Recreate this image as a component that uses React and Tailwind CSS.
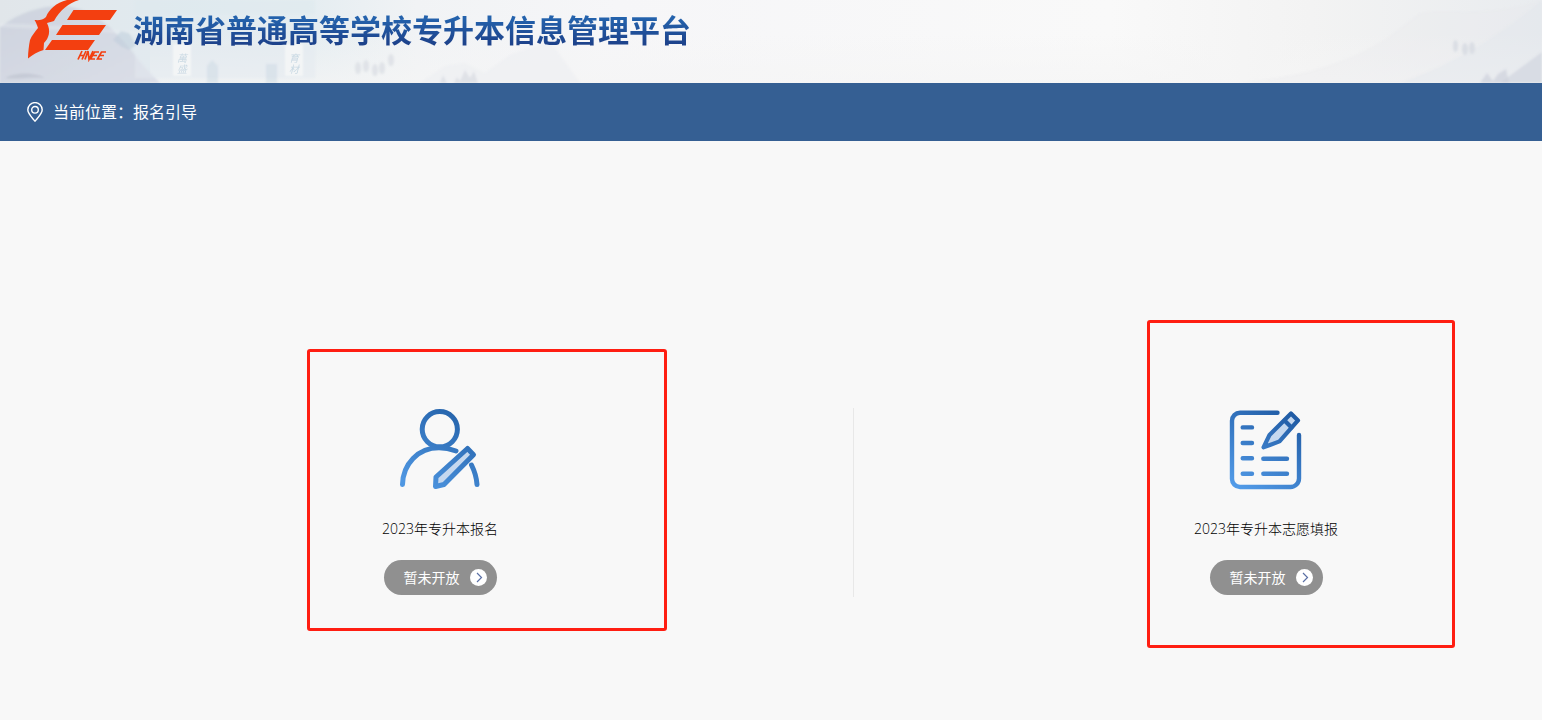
const font = "font-['Open_Sans','Noto_Sans_CJK_SC',sans-serif]";

function BannerArt() {
  return (
    <svg className="absolute inset-0 h-full w-full" viewBox="0 0 1542 83" preserveAspectRatio="none" aria-hidden="true">
      <defs>
        <linearGradient id="sky" x1="0" x2="1" y1="0" y2="0">
          <stop offset="0" stopColor="#e1e6ea" />
          <stop offset="0.1" stopColor="#e1eaef" />
          <stop offset="0.2" stopColor="#e5edf1" />
          <stop offset="0.27" stopColor="#f1f3f5" />
          <stop offset="0.4" stopColor="#f6f6f8" />
          <stop offset="0.72" stopColor="#f9f9f9" />
          <stop offset="0.85" stopColor="#f3f3f3" />
          <stop offset="1" stopColor="#e9ecef" />
        </linearGradient>
        <linearGradient id="mist" x1="0" x2="0" y1="0" y2="1">
          <stop offset="0.4" stopColor="#f5f5f5" stopOpacity="0" />
          <stop offset="1" stopColor="#f5f5f5" stopOpacity="0.7" />
        </linearGradient>
        <linearGradient id="hill" x1="0" x2="1" y1="0" y2="1">
          <stop offset="0" stopColor="#c9cfdb" />
          <stop offset="1" stopColor="#d9dbe6" />
        </linearGradient>
        <filter id="haze" x="-10%" y="-10%" width="120%" height="120%">
          <feGaussianBlur stdDeviation="1" />
        </filter>
      </defs>
      <rect width="1542" height="83" fill="url(#sky)" />
      <rect x="150" width="1392" height="83" fill="url(#mist)" />
      <g filter="url(#haze)">
        <path d="M0 27C20 12 42 5 66 6c30 4 48 24 66 45 8 12 18 22 28 32H0Z" fill="url(#hill)" opacity="0.8" />
        <path d="M0 23l60 3 90 6v3l-90-5-60-3Z" fill="#eef1f4" opacity="0.3" />
        <path d="M5 78c10-6 30-6 40 0-12-2-26 2-40 0Z" fill="#b8bdc9" opacity="0.5" />
        <path d="M113 40l8-9 8 2 7 12-7 5-7-3Z" fill="#bccbda" opacity="0.5" />
        <path d="M135 0h180v14H135Z" fill="#dbe8ee" opacity="0.4" />
        <path d="M135 46h180v32H135Z" fill="#e4eaef" opacity="0.5" />
        <path d="M173 44h18v32h-18ZM285 44h18v32h-18Z" fill="#f3f5f6" />
        <path d="M207 83V66l5-6 6 6v17ZM266 64h11v19h-11Z" fill="#ccd9e3" opacity="0.5" />
        <path d="M355 68c0-8 6-8 6 0s-6 8-6 0Zm8-2c0-8 6-8 6 0s-6 8-6 0Zm9 4c0-8 6-8 6 0s-6 8-6 0Zm7-2c0-8 6-8 6 0s-6 8-6 0Zm9-8c0-8 6-8 6 0s-6 8-6 0Z" fill="#d8dde3" opacity="0.7" />
        <path d="M420 83l25-17 20-3 20 10 25-18 40-14 30 42Z" fill="#eceef2" opacity="0.6" />
        <path d="M454 83l3-6 3 4 5-11 5 8 4-7 4 12ZM440 83l3-8 4 8Z" fill="#d8dbe3" opacity="0.7" />
        <path d="M1240 83c60-8 80-12 120-30 30-14 40-26 60-40 30-6 60 6 122-13v83Z" fill="#e6e9ed" opacity="0.25" />
        <path d="M1400 83c60-22 100-48 142-83v83Z" fill="#e0e4ea" opacity="0.35" />
        <path d="M1500 83l42-31v31Z" fill="#d3d8e1" opacity="0.8" />
        <path d="M1480 83l7-10 6 8 5-7 8-5 3 14Z" fill="#ced2dc" opacity="0.7" />
        <path d="M1453 46c0-8 5-8 5 0s-5 8-5 0Zm9 3c0-8 6-8 6 0s-6 8-6 0Zm7-1c0-8 6-8 6 0s-6 8-6 0Z" fill="#dadee4" />
      </g>
      <g fill="#c9d9e3" fontSize="10" fontStyle="italic" textAnchor="middle">
        <text x="182" y="62">萬</text>
        <text x="182" y="73">盛</text>
        <text x="294" y="62">育</text>
        <text x="294" y="73">材</text>
      </g>
    </svg>
  );
}

function Logo() {
  return (
    <svg className="h-[62px] w-[92px] shrink-0" viewBox="0 0 92 62" role="img" aria-label="HNEE">
      <g fill="#f33f10">
        <path d="M53 0C43 3 34 10 28 21C26 22 23 22 21 23C25 31 23 38 18 43L17.500 50C12 51.500 6 55 2 58.500C2 52 3 45 4 40C6 35 9 32 12 28C11 25 10 22 8.500 20C13 20.500 17 20 20 17C23 9 30 3 41 0Z" />
        <path d="M47.500 10H91L84 20H41ZM36.500 25H80L73 35H30ZM26 40H69L62 50H19Z" />
      </g>
      <path
        d="M56 51l-4 8.500M60 51l-4 8.500M54 55.500h4M59 59.500l3-8.500 1 8.500 4-8.500M73 52h-4.500l-4 7H69M66.500 55.500h4.500M80 52h-4.500l-4 7H76M73.500 55.500h4.500"
        fill="none"
        stroke="#f33f10"
        strokeWidth="1.700"
      />
    </svg>
  );
}

function PinIcon() {
  return (
    <svg className="h-5 w-4 shrink-0" viewBox="0 0 16 20" fill="none" stroke="white" strokeWidth="1.400" aria-hidden="true">
      <path d="M8 19.200C6 16.500 .8 12 .8 7.800a7.200 7.200 0 0 1 14.400 0C15.200 12 10 16.500 8 19.200Z" />
      <circle cx="8" cy="7.800" r="3.300" />
    </svg>
  );
}

function PersonIcon() {
  return (
    <svg className="h-[82px] w-20" viewBox="0 0 80 82" fill="none" strokeLinecap="round" strokeLinejoin="round" aria-hidden="true">
      <defs>
        <linearGradient id="personBlue" gradientUnits="userSpaceOnUse" x1="60" y1="5" x2="15" y2="80">
          <stop stopColor="#2563ab" />
          <stop offset="1" stopColor="#4f97e2" />
        </linearGradient>
      </defs>
      <g stroke="url(#personBlue)" strokeWidth="5">
        <circle cx="39.800" cy="21.200" r="17.600" />
        <path d="M2.500 76.500C3 56 18 39.800 39 39.800c6 0 11 1 17 3.200M71.500 57c3 6 5 12 5.500 19.500" />
        <path d="M67.500 40.500l6 6.200L44 76.500l-8.500 2 .5-9.500Z" fill="#c5d8ef" />
      </g>
    </svg>
  );
}

function FormIcon() {
  return (
    <svg className="h-[82px] w-20" viewBox="0 0 80 82" fill="none" strokeLinecap="round" strokeLinejoin="round" aria-hidden="true">
      <defs>
        <linearGradient id="formBlue" gradientUnits="userSpaceOnUse" x1="62" y1="3" x2="12" y2="80">
          <stop stopColor="#205ba4" />
          <stop offset="1" stopColor="#529be8" />
        </linearGradient>
      </defs>
      <g stroke="url(#formBlue)" strokeWidth="4.400">
        <path d="M51.500 4.800H14a8 8 0 0 0-8 8V71a8 8 0 0 0 8 8h50.500a8.500 8.500 0 0 0 8.500-8.500V27" />
        <path d="M16.700 19.400h9.300M16.700 35h9.300M16.700 50.300h9.300M16.700 65.700h9.300M37.300 50.700h23.700M37.300 65.700h23.700" />
      </g>
      <g stroke="url(#formBlue)" strokeWidth="4.200">
        <path d="M65 5.500l7 6.900-18.500 21-16 5.900L43.500 27Z" fill="#c5d8ef" />
        <path d="M58.500 12.500l7 7" />
      </g>
    </svg>
  );
}

function Entry({ icon, title, frame }) {
  return (
    <section className="relative flex w-[180px] flex-col items-center">
      {icon}
      <h2 className="mt-[27px] text-sm leading-6 font-light whitespace-nowrap text-black">{title}</h2>
      <button type="button" className="mt-[19px] flex h-[35px] items-center gap-[9px] rounded-full bg-[#909090] pr-[9px] pl-5 text-sm whitespace-nowrap text-white">
        暂未开放
        <svg className="size-[19px]" viewBox="0 0 19 19" aria-hidden="true">
          <circle cx="9.500" cy="9.500" r="8.500" fill="white" />
          <path d="M8 5l4.500 4.500L8 14" fill="none" stroke="#5a6fa5" strokeWidth="1.200" />
        </svg>
      </button>
      <div className={`pointer-events-none absolute rounded-[3px] border-3 border-[#ff1e12] ${frame}`} />
    </section>
  );
}

export default function App() {
  return (
    <div className={`min-h-screen bg-[#f8f8f8] ${font}`}>
      <header className="relative flex h-[83px] items-start overflow-hidden pl-[26px]">
        <BannerArt />
        <div className="relative flex items-start gap-[15px]">
          <Logo />
          <h1 className="mt-[7px] bg-linear-to-b from-[#2462ac] from-25% to-[#1d428b] to-80% bg-clip-text text-[31px] leading-[46px] font-bold whitespace-nowrap text-transparent">
            湖南省普通高等学校专升本信息管理平台
          </h1>
        </div>
      </header>
      <nav aria-label="当前位置" className="flex h-[58px] items-center gap-[10px] bg-[#355f93] pl-[27px] text-base text-white">
        <PinIcon />
        <span>当前位置：报名引导</span>
      </nav>
      <main className="grid grid-cols-[854fr_688fr] pt-[267px]">
        <div className="flex justify-center border-r border-[#e8e8e8] pb-0.5 pl-[27px]">
          <Entry icon={<PersonIcon />} title="2023年专升本报名" frame="-top-[59px] -right-[137px] -bottom-[36px] -left-[43px]" />
        </div>
        <div className="flex items-start justify-center pl-[136px]">
          <Entry icon={<FormIcon />} title="2023年专升本志愿填报" frame="-top-[88px] -right-[99px] -bottom-[53px] -left-[29px]" />
        </div>
      </main>
    </div>
  );
}
